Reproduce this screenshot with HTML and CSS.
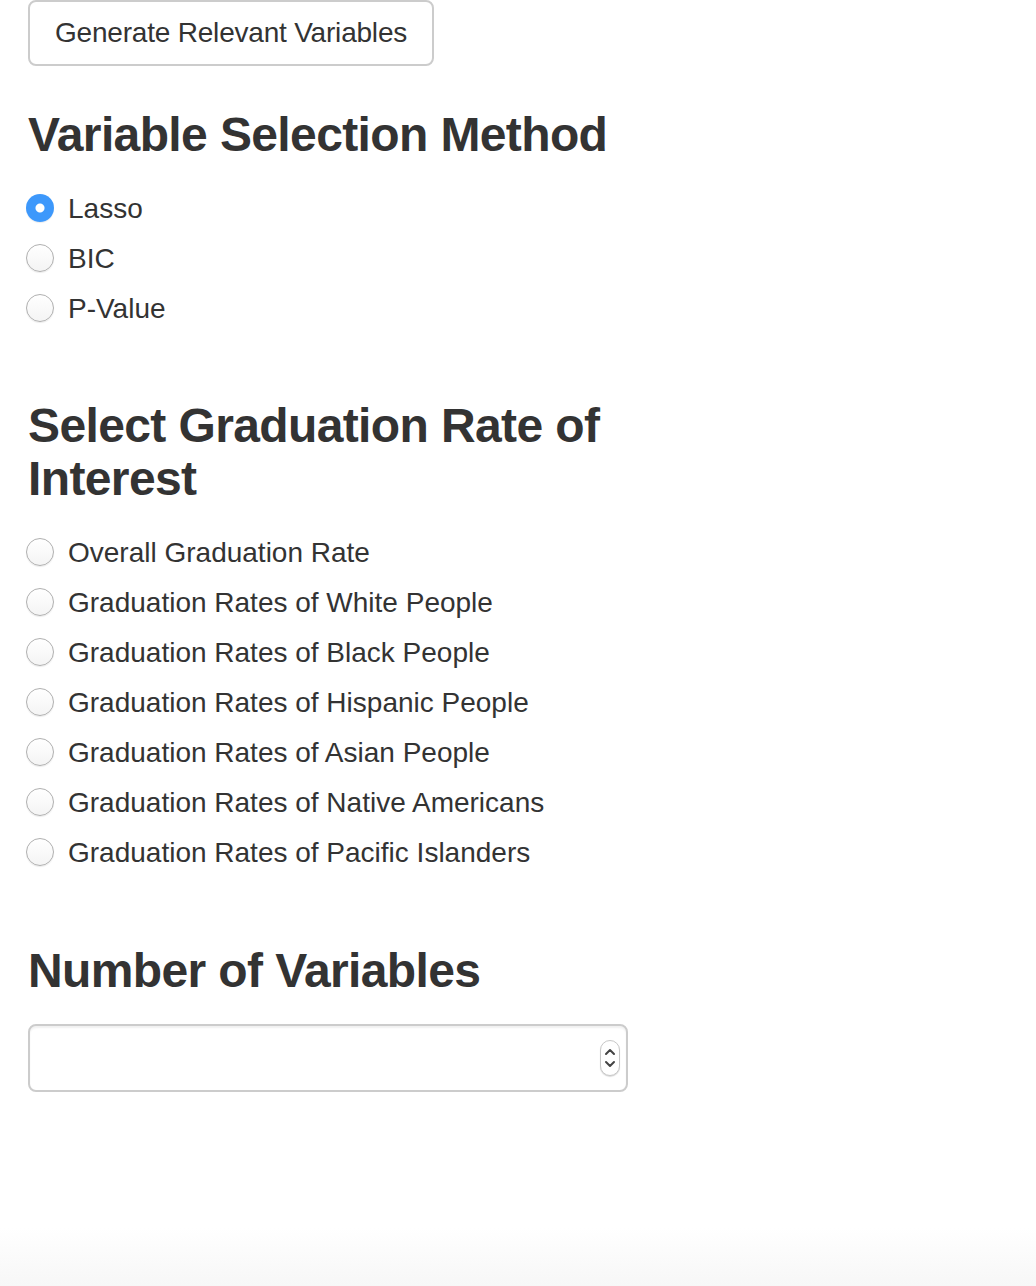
FILE: index.html
```html
<!DOCTYPE html>
<html lang="en">
<head>
<meta charset="utf-8">
<title>Variable Selection</title>
<link rel="stylesheet" href="styles.css">
</head>
<body>
<div class="panel">
  <button class="btn" type="button">Generate Relevant Variables</button>

  <h3 class="heading first">Variable Selection Method</h3>
  <div class="radios">
    <label class="radio"><input type="radio" name="method" checked><span>Lasso</span></label>
    <label class="radio"><input type="radio" name="method"><span>BIC</span></label>
    <label class="radio"><input type="radio" name="method"><span>P-Value</span></label>
  </div>

  <h3 class="heading rate">Select Graduation Rate of Interest</h3>
  <div class="radios">
    <label class="radio"><input type="radio" name="rate"><span>Overall Graduation Rate</span></label>
    <label class="radio"><input type="radio" name="rate"><span>Graduation Rates of White People</span></label>
    <label class="radio"><input type="radio" name="rate"><span>Graduation Rates of Black People</span></label>
    <label class="radio"><input type="radio" name="rate"><span>Graduation Rates of Hispanic People</span></label>
    <label class="radio"><input type="radio" name="rate"><span>Graduation Rates of Asian People</span></label>
    <label class="radio"><input type="radio" name="rate"><span>Graduation Rates of Native Americans</span></label>
    <label class="radio"><input type="radio" name="rate"><span>Graduation Rates of Pacific Islanders</span></label>
  </div>

  <h3 class="heading num">Number of Variables</h3>
  <div class="numwrap">
    <input class="numinput" type="text" value="">
    <span class="spinner">
      <svg width="20" height="36" viewBox="0 0 20 36">
        <path d="M6 14 L10 10 L14 14" fill="none" stroke="#444" stroke-width="2" stroke-linecap="round" stroke-linejoin="round"/>
        <path d="M6 22 L10 26 L14 22" fill="none" stroke="#444" stroke-width="2" stroke-linecap="round" stroke-linejoin="round"/>
      </svg>
    </span>
  </div>
</div>
</body>
</html>
```

FILE: styles.css
```css
html {
  height: 100%;
  background: linear-gradient(to bottom, #ffffff 0, #ffffff 1228px, #f7f7f7 1286px);
}
body {
  margin: 0;
  font-family: "Liberation Sans", Arial, Helvetica, sans-serif;
  color: #333;
  font-size: 28px;
  line-height: 40px;
}
.panel {
  padding: 0 0 0 28px;
  width: 600px;
}
.btn {
  display: block;
  box-sizing: border-box;
  height: 66px;
  margin: 0;
  padding: 0 25px;
  font-family: inherit;
  font-size: 28px;
  letter-spacing: -0.2px;
  color: #333;
  background: #fff;
  border: 2px solid #ccc;
  border-radius: 8px;
}
.heading {
  margin: 68px 0 20px 0;
  font-size: 48px;
  line-height: 52.8px;
  font-weight: bold;
  color: #333;
  width: 600px;
  letter-spacing: -0.62px;
}
.heading.first {
  margin-top: 43px;
  margin-bottom: 21px;
}
.heading.rate {
  margin-top: 67px;
  margin-bottom: 22px;
}
.heading.num {
  margin-bottom: 26px;
}
.radios {
  display: flex;
  flex-direction: column;
  margin-left: -2px;
}
.radio {
  display: flex;
  align-items: center;
  height: 50px;
}
.radio span {
  padding-top: 2px;
}
.radio input {
  appearance: none;
  -webkit-appearance: none;
  box-sizing: border-box;
  width: 28px;
  height: 28px;
  margin: 0 14px 0 0;
  border-radius: 50%;
  border: 1.5px solid #b0b0b0;
  background: linear-gradient(to bottom, #fff, #f4f4f4);
  box-shadow: 0 1px 1px rgba(0,0,0,0.08);
  flex: none;
}
.radio input:checked {
  border: none;
  background: radial-gradient(circle, #fff 0, #fff 4px, #3d98fb 5px);
}
.numwrap {
  box-sizing: border-box;
  display: flex;
  align-items: center;
  width: 600px;
  height: 68px;
  margin-top: 1px;
  border: 2px solid #ccc;
  border-radius: 8px;
  box-shadow: inset 0 2px 2px rgba(0,0,0,0.06);
  background: #fff;
  padding: 0 6px 0 24px;
}
.numinput {
  flex: 1;
  border: none;
  outline: none;
  font-family: inherit;
  font-size: 28px;
  background: transparent;
  min-width: 0;
}
.spinner {
  display: flex;
  box-sizing: border-box;
  width: 20px;
  height: 36px;
  border: 1px solid #c8c8c8;
  border-radius: 10px;
  box-shadow: 0 1px 1px rgba(0,0,0,0.15);
  background: #fff;
}
.spinner svg {
  display: block;
  margin: -1px;
}
```
